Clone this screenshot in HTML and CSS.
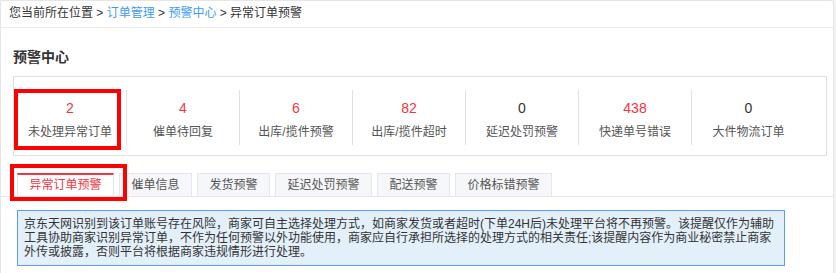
FILE: index.html
```html
<!DOCTYPE html>
<html lang="zh-CN">
<head>
    <meta charset="UTF-8">
    <meta name="viewport" content="width=device-width, initial-scale=1.0">
    <title>异常订单预警</title>
    <link rel="stylesheet" href="styles.css">
</head>
<body>

    <div class="card">
        <div class="crumbs">
            您当前所在位置 &gt; <a href="#">订单管理</a> &gt; <a href="#">预警中心</a> &gt; <span>异常订单预警</span>
        </div>

        <div class="panel-head">
            <h2>预警中心</h2>
            <div class="stats">
                <div class="mark mark-stat"></div>
                <div class="stat"><div class="num red">2</div><div class="label">未处理异常订单</div></div>
                <div class="stat"><div class="num red">4</div><div class="label">催单待回复</div></div>
                <div class="stat"><div class="num red">6</div><div class="label">出库/揽件预警</div></div>
                <div class="stat"><div class="num red">82</div><div class="label">出库/揽件超时</div></div>
                <div class="stat"><div class="num">0</div><div class="label">延迟处罚预警</div></div>
                <div class="stat"><div class="num red">438</div><div class="label">快递单号错误</div></div>
                <div class="stat"><div class="num">0</div><div class="label">大件物流订单</div></div>
            </div>
        </div>

        <div class="tabs">
            <div class="tab active">异常订单预警</div>
            <div class="tab">催单信息</div>
            <div class="tab">发货预警</div>
            <div class="tab">延迟处罚预警</div>
            <div class="tab">配送预警</div>
            <div class="tab">价格标错预警</div>
            <div class="mark mark-tab"></div>
        </div>

        <div class="tab-body">
            <div class="notice">京东天网识别到该订单账号存在风险，商家可自主选择处理方式，如商家发货或者超时(下单24H后)未处理平台将不再预警。该提醒仅作为辅助工具协助商家识别异常订单，不作为任何预警以外功能使用，商家应自行承担所选择的处理方式的相关责任;该提醒内容作为商业秘密禁止商家外传或披露，否则平台将根据商家违规情形进行处理。</div>
        </div>
    </div>

</body>
</html>
```

FILE: styles.css
```css
body {
    margin: 0;
    background-color: #f2f2f2;
    font-family: "Liberation Sans", "Noto Sans CJK SC", sans-serif;
    font-size: 12px;
    color: #333;
}
.card {
    width: 834px;
    height: 100vh;
    box-sizing: border-box;
    background-color: #fff;
    border: 1px solid #e6e6e6;
    border-bottom: none;
    border-radius: 0 4px 0 0;
}
.crumbs {
    height: 26px;
    line-height: 25px;
    padding-left: 8px;
    border-bottom: 1px solid #ececec;
    color: #333;
}
.crumbs a {
    color: #3d9cf5;
    text-decoration: none;
}
.panel-head {
    padding: 19px 6px 0 12px;
}
h2 {
    margin: 0 0 9px;
    font-size: 14px;
    line-height: 20px;
    font-weight: bold;
    color: #333;
}
.stats {
    position: relative;
    display: flex;
    height: 80px;
    box-sizing: border-box;
    border: 1px solid #dde1e8;
}
.stat {
    width: 113px;
    height: 55px;
    margin: 13px 0 0;
    padding-top: 8px;
    box-sizing: border-box;
    border-right: 1px solid #dde1e8;
    text-align: center;
}
.stat:last-child {
    border-right: none;
}
.num {
    font-size: 14px;
    line-height: 20px;
    color: #333;
}
.num.red {
    color: #f5333f;
}
.label {
    margin-top: 4px;
    line-height: 20px;
    color: #555;
}
.mark {
    position: absolute;
    box-sizing: border-box;
    border: 4px solid #ff0000;
}
.mark-stat {
    left: 0;
    top: 12px;
    width: 107px;
    height: 61px;
}
.tabs {
    position: relative;
    display: flex;
    gap: 5px;
    margin-top: 17px;
    padding-left: 16px;
    border-bottom: 1px solid #e4e7ed;
}
.tab {
    height: 23px;
    line-height: 22px;
    padding: 0 11.5px;
    box-sizing: border-box;
    background-color: #f5f7fa;
    border: 1px solid #e4e7ed;
    border-bottom: none;
    color: #555;
}
.tab.active {
    background-color: #fff;
    border-top: 2px solid #f5333f;
    line-height: 21px;
    color: #f5333f;
}
.mark-tab {
    left: 9px;
    top: -9px;
    width: 117px;
    height: 37px;
}
.tab-body {
    padding: 13px 0 0 16px;
}
.notice {
    width: 768px;
    box-sizing: border-box;
    padding: 6px 10px 6px 6px;
    line-height: 14px;
    background-color: #e3f0fa;
    border: 1px solid #5b9cf0;
    color: #333;
}
```
